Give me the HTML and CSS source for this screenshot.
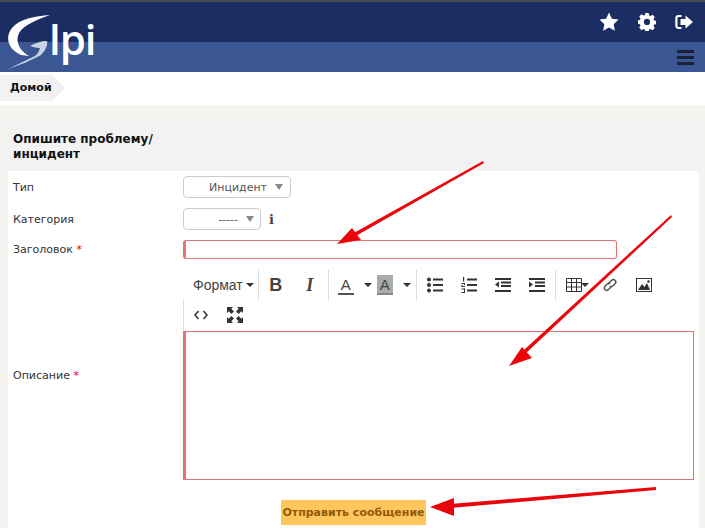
FILE: index.html
```html
<!DOCTYPE html>
<html lang="en">

<head>
  <meta charset="UTF-8">
  <title>GLPI</title>
  <link rel="stylesheet" href="styles.css">
</head>

<body>
  <header class="top">
    <div class="top-main">
      <ul class="top-icons">
        <li>
          <svg width="20" height="20" viewBox="0 0 20 20"><path fill="#fff" d="M10 .6l2.9 6.1 6.6.9-4.8 4.6 1.2 6.6-5.9-3.2-5.9 3.2 1.2-6.6L.5 7.6l6.6-.9z"/></svg>
        </li>
        <li>
          <svg width="18" height="18" viewBox="0 0 18 18"><path fill="#fff" fill-rule="evenodd" d="M7.4.5h3.2l.5 2.3 1.4.6 2-1.3 2.300 2.300-1.300 2 .6 1.400 2.300.5v3.200l-2.300.5-.6 1.400 1.300 2-2.300 2.300-2-1.300-1.400.6-.5 2.300H7.400l-.5-2.300-1.400-.6-2 1.300L1.200 15l1.300-2-.6-1.400L-.4 11V7.800l2.300-.5.6-1.400-1.300-2 2.300-2.300 2 1.300 1.400-.6zM9 6.200a3.100 3.100 0 1 0 0 6.200 3.100 3.100 0 0 0 0-6.200z" transform="translate(0 -.4)"/></svg>
        </li>
        <li>
          <svg width="18" height="16" viewBox="0 0 18 16"><path fill="#fff" d="M6.500 1v2H3.800C3 3 2.500 3.500 2.500 4.300v7.400c0 .8.500 1.300 1.300 1.300h2.700v2H3.500C1.500 15 .3 13.800.3 11.800V4.200C.3 2.200 1.500 1 3.500 1zM10.500 1.500L18 8l-7.500 6.500V11H5.500V5h5z"/></svg>
        </li>
      </ul>
    </div>
    <div class="top-sub">
      <div class="menu-btn"><span></span><span></span><span></span></div>
    </div>
    <a class="logo" href="#">
      <svg width="50" height="58" viewBox="0 0 50 58"><path fill="#fff" d="M45 1C30 2 14 5 7 14-1 24 4 36 16 41l8 1c-9-5-13-13-11-20C15 13 28 7 45 1z"/><path fill="#c9d2e4" d="M25 32c5-3 11-5 17-5 1 3-1 9-6 14-8 5-20 9-34 15 9-5 19-10 28-14 3-2 4-5 5-8-3 0-7-1-10-2z"/></svg>
      <span class="logo-text">lpi</span>
    </a>
  </header>

  <nav class="crumbs">
    <a class="crumb" href="#">Домой</a>
  </nav>

  <main class="page">
    <form class="card">
      <h2 class="card-title">Опишите проблему/<br>инцидент</h2>

      <div class="row row-type">
        <label>Тип</label>
        <div class="select select-type"><span>Инцидент</span><i class="caret"></i></div>
      </div>

      <div class="row row-cat">
        <label>Категория</label>
        <div class="select select-cat"><span>-----</span><i class="caret"></i></div>
        <span class="info">i</span>
      </div>

      <div class="row row-title">
        <label>Заголовок <b>*</b></label>
        <input class="title-input" type="text">
      </div>

      <div class="row row-desc">
        <label>Описание <b>*</b></label>
        <div class="editor">
          <div class="toolbar">
            <div class="tb-group">
              <span class="tb-format">Формат</span><i class="tb-caret"></i>
            </div>
            <div class="tb-group">
              <span class="tb-btn tb-bold">B</span>
              <span class="tb-btn tb-italic">I</span>
            </div>
            <div class="tb-group">
              <span class="tb-btn tb-color">A</span><i class="tb-caret tb-caret-wide"></i>
              <span class="tb-btn tb-color tb-bg">A</span><i class="tb-caret tb-caret-wide"></i>
            </div>
            <div class="tb-group">
              <span class="tb-btn">
                <svg width="16" height="16" viewBox="0 0 16 16" fill="#333"><circle cx="2" cy="2.500" r="2"/><circle cx="2" cy="8" r="2"/><circle cx="2" cy="13.500" r="2"/><rect x="6" y="1.500" width="10" height="2"/><rect x="6" y="7" width="10" height="2"/><rect x="6" y="12.500" width="10" height="2"/></svg>
              </span>
              <span class="tb-btn">
                <svg width="16" height="16" viewBox="0 0 16 16" fill="#333"><rect x="6" y="1.500" width="10" height="2"/><rect x="6" y="7" width="10" height="2"/><rect x="6" y="12.500" width="10" height="2"/><rect x="2" y="0" width="1.200" height="4.500"/><rect x="0.500" y="6" width="3.500" height="1"/><rect x="0.500" y="9" width="3.500" height="1"/><rect x="3" y="6" width="1" height="2"/><rect x="0.500" y="8" width="1" height="1.500"/><rect x="0.500" y="11.500" width="3.500" height="1"/><rect x="0.500" y="15" width="3.500" height="1"/><rect x="3" y="11.500" width="1" height="4"/></svg>
              </span>
              <span class="tb-btn">
                <svg width="16" height="16" viewBox="0 0 16 16" fill="#333"><rect width="16" height="2" y="1"/><rect x="6" y="4.500" width="10" height="2"/><rect x="6" y="8" width="10" height="2"/><rect y="13" width="16" height="2"/><path d="M4 4.500v6L0 7.500z"/></svg>
              </span>
              <span class="tb-btn">
                <svg width="16" height="16" viewBox="0 0 16 16" fill="#333"><rect width="16" height="2" y="1"/><rect x="6" y="4.500" width="10" height="2"/><rect x="6" y="8" width="10" height="2"/><rect y="13" width="16" height="2"/><path d="M0 4.500v6l4-3z"/></svg>
              </span>
            </div>
            <div class="tb-group tb-last">
              <span class="tb-btn tb-table">
                <svg width="16" height="14" viewBox="0 0 16 14" fill="none" stroke="#333"><path d="M.5.500h15v13H.5zM.5 4.500h15M.5 9h15M5.500.500v13M10.500.500v13"/></svg>
              </span><i class="tb-caret tb-caret-table"></i>
              <span class="tb-btn">
                <svg width="16" height="16" viewBox="0 0 16 16" fill="none" stroke="#555" stroke-width="1.500"><path d="M6.500 6.500l3-3c1-1 2.500-1.200 3.500-.300s.900 2.500 0 3.500l-2 2c-1 1-2.300 1-3.200.300"/><path d="M9.500 9.500l-3 3c-1 1-2.500 1.200-3.500.300s-.900-2.500 0-3.500l2-2c1-1 2.300-1 3.200-.300"/></svg>
              </span>
              <span class="tb-btn">
                <svg width="16" height="14" viewBox="0 0 16 14"><rect x=".5" y=".5" width="15" height="13" fill="#fff" stroke="#333"/><path fill="#333" d="M2 12l4-6 2.500 3L11 5l3 7z"/><circle cx="12.500" cy="3.500" r="1.200" fill="#333"/></svg>
              </span>
            </div>
            <div class="tb-group tb-second">
              <span class="tb-btn">
                <svg width="14" height="10" viewBox="0 0 14 10" fill="none" stroke="#333" stroke-width="1.500"><path d="M4.500 1L1 5l3.500 4M9.500 1L13 5l-3.500 4"/></svg>
              </span>
              <span class="tb-btn">
                <svg width="16" height="16" viewBox="0 0 16 16" fill="#333"><path d="M0 0h6L4.300 1.700 7 4.400 4.400 7 1.700 4.300 0 6zM16 0v6l-1.700-1.700L11.600 7 9 4.400l2.700-2.700L10 0zM0 16v-6l1.700 1.700L4.400 9 7 11.600l-2.700 2.700L6 16zM16 16h-6l1.700-1.700L9 11.600 11.600 9l2.700 2.700L16 10z"/></svg>
              </span>
            </div>
          </div>
          <textarea class="desc-input"></textarea>
        </div>
      </div>

      <div class="actions">
        <button class="submit" type="button">Отправить сообщение</button>
      </div>
    </form>
  </main>

  <!-- red arrows drawn on top of the screenshot -->
  <svg class="arrows" width="705" height="528" viewBox="0 0 705 528" fill="#e9050b" stroke="none">
    <path d="M483 161L352 234l2 3L484 163z"/>
    <path d="M337 244l24-4-9-12z"/>
    <path d="M671 215L524 350l2.500 2.500L672 217z"/>
    <path d="M509 366l23-8-10-11z"/>
    <path d="M656 487L450 504l0 4L656 490z"/>
    <path d="M430 507l24-9 0 18z"/>
  </svg>
</body>

</html>
```

FILE: styles.css
```css
body {
  font-family: "DejaVu Sans", sans-serif;
  font-size: 11px;
  color: #222;
  margin: 0;
  padding: 0;
  height: 528px;
  overflow: hidden;
  background-color: #f5f4f0;
}

.top {
  position: relative;
  border-top: 2px solid #4a4a4a;
}

.top-main {
  height: 40px;
  background-color: #1c2d63;
  display: flex;
  justify-content: flex-end;
}

.top-icons {
  list-style-type: none;
  margin: 0;
  padding: 0 12px 0 0;
  display: flex;
  align-items: center;
  gap: 19px;
}

.top-icons li {
  display: flex;
}

.top-sub {
  height: 30px;
  background-color: #3a5693;
  display: flex;
  justify-content: flex-end;
  align-items: center;
  padding-right: 11px;
}

.menu-btn {
  display: flex;
  flex-direction: column;
  gap: 3px;
}

.menu-btn span {
  display: block;
  width: 17px;
  height: 3px;
  background-color: #1b2233;
}

.logo {
  position: absolute;
  left: 5px;
  top: 12px;
  display: flex;
  text-decoration: none;
}

.logo-text {
  font-family: "Open Sans", sans-serif;
  font-size: 42px;
  font-weight: 600;
  line-height: 42px;
  letter-spacing: -1px;
  color: #fff;
  margin-left: -6px;
  margin-top: 4px;
  height: 50px;
}

.crumbs {
  height: 33px;
  background-color: #fff;
  display: flex;
  align-items: flex-start;
  padding-top: 3px;
  box-sizing: border-box;
}

.crumb {
  display: block;
  height: 26px;
  line-height: 26px;
  padding: 0 1px 0 10px;
  font-weight: bold;
  color: #111;
  text-decoration: none;
  background-color: #f2f2f2;
  position: relative;
}

.crumb::after {
  content: "";
  position: absolute;
  left: 100%;
  top: 0;
  border-left: 12px solid #f2f2f2;
  border-top: 13px solid transparent;
  border-bottom: 13px solid transparent;
}

.page {
  padding: 16px 6px 0 8px;
}

.card {
  background-color: #fff;
  padding: 0 5px 0 0;
  height: 420px;
}

.card-title {
  margin: 0 -5px 0 0;
  padding: 11px 0 10px 5px;
  background-color: #f2f2f2;
  font-size: 12px;
  line-height: 15px;
  color: #111;
  height: 29px;
}

.row {
  display: flex;
  align-items: center;
}

.row label {
  width: 175px;
  padding-left: 5px;
  flex: none;
  color: #333;
  box-sizing: border-box;
}

.row label b {
  color: #e00;
  font-weight: normal;
}

.row-type {
  margin-top: 5px;
}

.row-cat {
  margin-top: 10px;
}

.row-title {
  margin-top: 10px;
}

.row-desc {
  margin-top: 11px;
}

.select {
  height: 22px;
  box-sizing: border-box;
  border: 1px solid #ccc;
  border-radius: 4px;
  background-color: #fff;
  display: flex;
  align-items: center;
  justify-content: flex-end;
  color: #555;
}

.select-type {
  width: 108px;
  padding-right: 7px;
}

.select-cat {
  width: 78px;
  padding-right: 6px;
}

.caret {
  width: 0;
  height: 0;
  margin-left: 8px;
  border-left: 4px solid transparent;
  border-right: 4px solid transparent;
  border-top: 6px solid #888;
}

.info {
  font-family: "DejaVu Serif", serif;
  font-weight: bold;
  font-size: 13px;
  margin-left: 8px;
  color: #444;
}

.title-input {
  width: 434px;
  height: 19px;
  box-sizing: border-box;
  border: 1px solid #e57373;
  border-left-width: 3px;
  border-radius: 3px;
  margin: 0;
  padding: 0;
  background-color: #fff;
}

.editor {
  width: 511px;
  flex: none;
}

.toolbar {
  display: flex;
  flex-wrap: wrap;
  align-items: center;
  height: 61px;
  align-content: flex-start;
}

.tb-group {
  height: 30px;
  display: flex;
  align-items: center;
  padding: 0 0 0 10px;
  border-right: 1px solid #ddd;
  box-sizing: border-box;
}

.tb-group:nth-child(2) {
  padding-left: 9px;
}

.tb-group:nth-child(3) {
  padding-left: 9px;
}

.tb-last {
  border-right: none;
}

.tb-second {
  border-right: none;
  border-left: 1px solid #ddd;
  padding-left: 9px;
}

.tb-format {
  font-family: "Liberation Sans", sans-serif;
  font-size: 14px;
  color: #444;
}

.tb-caret {
  width: 0;
  height: 0;
  margin: 0 4px 0 3px;
  border-left: 4px solid transparent;
  border-right: 4px solid transparent;
  border-top: 4px solid #333;
}

.tb-caret-wide {
  margin: 0 5px 0 10px;
}

.tb-caret-table {
  margin: 0 13px 0 -1px;
}

.tb-btn {
  width: 16px;
  height: 20px;
  display: flex;
  align-items: center;
  justify-content: center;
  margin-right: 18px;
  font-family: "Liberation Sans", sans-serif;
  font-size: 18px;
  color: #444;
}

.tb-group .tb-btn:last-child {
  margin-right: 10px;
}

.tb-bold {
  font-weight: bold;
}

.tb-italic {
  font-style: italic;
  font-family: "Liberation Serif", serif;
  font-weight: bold;
}

.tb-color {
  font-size: 15px;
  margin-right: 0;
  border-bottom: 2px solid #555;
  box-sizing: border-box;
}

.tb-bg {
  background-color: #aaa;
  border-bottom-color: #888;
  margin-left: 0;
}

.tb-table {
  margin-right: 0;
}

.desc-input {
  display: block;
  width: 511px;
  height: 149px;
  margin: 0;
  padding: 0;
  box-sizing: border-box;
  border: 1px solid #e57373;
  border-left-width: 3px;
  background-color: #fff;
  resize: none;
}

.actions {
  display: flex;
  margin-top: 20px;
  padding-left: 273px;
}

.submit {
  width: 145px;
  height: 25px;
  padding: 0;
  border: none;
  background-color: #ffc65d;
  color: #8f5a0a;
  font-family: "DejaVu Sans", sans-serif;
  font-size: 11px;
  font-weight: bold;
}

.arrows {
  position: absolute;
  left: 0;
  top: 0;
}
```
